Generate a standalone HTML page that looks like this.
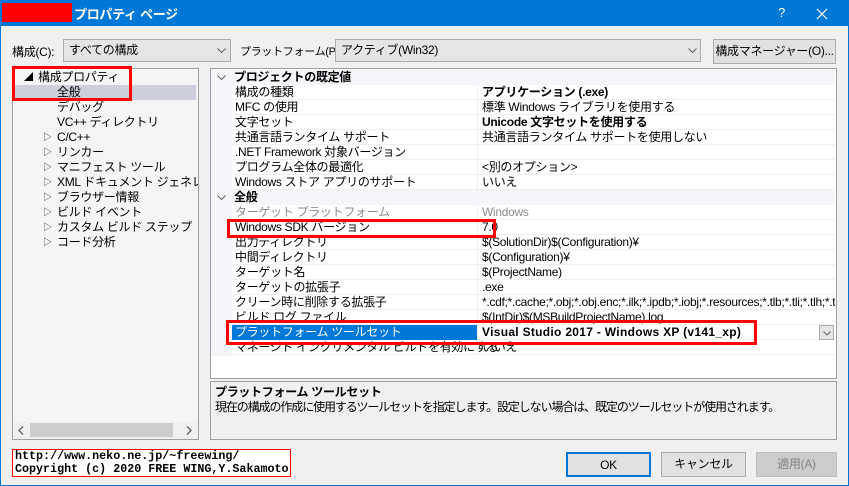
<!DOCTYPE html>
<html><head><meta charset="utf-8"><style>
*{margin:0;padding:0;box-sizing:border-box}
body{width:849px;height:486px;overflow:hidden;background:#f0f0f0;font-family:"Liberation Sans","Noto Sans CJK JP",sans-serif;font-size:12px;color:#000;position:relative;letter-spacing:-0.3px}
.a{position:absolute;white-space:nowrap}
.t{line-height:15px;height:15px}
.cb{background:#e5e5e5;border:1px solid #adadad;height:23px;line-height:21px;padding-left:5px}
.btn{background:#e1e1e1;border:1px solid #adadad;height:25px;line-height:23px;text-align:center}
.row{position:absolute;left:232px;width:603px;height:15px;border-bottom:1px solid #f0f0f0;background:#fff;line-height:14px}
.row .n{position:absolute;left:3px}
.row .v{position:absolute;left:245px;border-left:1px solid #f0f0f0;padding-left:4px;height:15px}
.hd{position:absolute;left:211px;width:624px;height:15px;background:#f4f6fa;font-weight:bold;line-height:15px}
.red{position:absolute;border:3px solid #f00}
</style></head><body>
<div class="a" style="left:0;top:0;width:849px;height:26px;background:#0078d7"></div>
<div class="a" style="left:2px;top:3px;width:70px;height:19px;background:#f00"></div>
<div class="a" style="left:74px;top:4px;color:#fff;font-size:13px;font-weight:bold">プロパティ ページ</div>
<div class="a" style="left:778px;top:5px;color:#fff;font-size:13px">?</div>
<svg class="a" style="left:816px;top:8px" width="12" height="12"><path d="M1 1L11 11M11 1L1 11" stroke="#fff" stroke-width="1.2"/></svg>
<div class="a" style="left:0;top:26px;width:1px;height:460px;background:#0078d7"></div>
<div class="a" style="left:848px;top:26px;width:1px;height:460px;background:#0078d7"></div>
<div class="a" style="left:0;top:485px;width:849px;height:1px;background:#0078d7"></div>

<div class="a" style="left:12px;top:43px">構成(C):</div>
<div class="a cb" style="left:63px;top:39px;width:168px">すべての構成</div>
<svg class="a" style="left:217px;top:48px" width="9" height="6"><path d="M0.5 0.5L4.5 4.5L8.5 0.5" stroke="#606060" fill="none"/></svg>
<div class="a" style="left:240px;top:43px;font-size:11px;letter-spacing:-0.3px">プラットフォーム(P):</div>
<div class="a cb" style="left:335px;top:39px;width:366px">アクティブ(Win32)</div>
<svg class="a" style="left:688px;top:48px" width="9" height="6"><path d="M0.5 0.5L4.5 4.5L8.5 0.5" stroke="#606060" fill="none"/></svg>
<div class="a btn" style="left:713px;top:39px;width:123px">構成マネージャー(O)...</div>

<div class="a" style="left:12px;top:68px;width:187px;height:372px;background:#f5f5f5;border:1px solid #a0a0a0;overflow:hidden">
<div class="a" style="left:0;top:16px;width:183px;height:15px;background:#cdd0dc"></div>
<div class="a t" style="left:11px;top:1px;font-size:9px">◢</div>
<div class="a t" style="left:25px;top:1px">構成プロパティ</div>
<div class="a t" style="left:44px;top:16px">全般</div>
<div class="a t" style="left:44px;top:31px">デバッグ</div>
<div class="a t" style="left:44px;top:46px">VC++ ディレクトリ</div>
<div class="a" style="left:30px;top:61px;font-size:9px;line-height:15px;color:#333">▷<br>▷<br>▷<br>▷<br>▷<br>▷<br>▷<br>▷</div>
<div class="a" style="left:44px;top:61px;line-height:15px">C/C++<br>リンカー<br>マニフェスト ツール<br>XML ドキュメント ジェネレーター<br>ブラウザー情報<br>ビルド イベント<br>カスタム ビルド ステップ<br>コード分析</div>
<div class="a" style="left:0;top:353px;width:185px;height:17px;background:#f0f0f0"></div>
<div class="a" style="left:17px;top:354px;width:143px;height:14px;background:#cdcdcd"></div>
<svg class="a" style="left:5px;top:357px" width="6" height="9"><path d="M5 0.5L1 4.5L5 8.5" stroke="#606060" fill="none" stroke-width="1.3"/></svg>
<svg class="a" style="left:173px;top:357px" width="6" height="9"><path d="M1 0.5L5 4.5L1 8.5" stroke="#606060" fill="none" stroke-width="1.3"/></svg>
</div>
<div class="red" style="left:12px;top:66px;width:120px;height:35px"></div>

<div class="a" style="left:210px;top:68px;width:627px;height:311px;background:#fff;border:1px solid #a0a0a0"></div>
<div class="a" style="left:211px;top:69px;width:21px;height:287px;background:#f4f6fa"></div>
<div class="hd" style="top:70px"><svg style="position:absolute;left:6px;top:5px" width="9" height="6"><path d="M0.5 0.5L4.5 4.5L8.5 0.5" stroke="#606060" fill="none"/></svg><span style="position:absolute;left:23px">プロジェクトの既定値</span></div>
<div class="row" style="top:85px"><span class="n">構成の種類</span><span class="v"><b>アプリケーション (.exe)</b></span></div>
<div class="row" style="top:100px"><span class="n">MFC の使用</span><span class="v">標準 Windows ライブラリを使用する</span></div>
<div class="row" style="top:115px"><span class="n">文字セット</span><span class="v"><b>Unicode 文字セットを使用する</b></span></div>
<div class="row" style="top:130px"><span class="n">共通言語ランタイム サポート</span><span class="v">共通言語ランタイム サポートを使用しない</span></div>
<div class="row" style="top:145px"><span class="n">.NET Framework 対象バージョン</span><span class="v"></span></div>
<div class="row" style="top:160px"><span class="n">プログラム全体の最適化</span><span class="v">&lt;別のオプション&gt;</span></div>
<div class="row" style="top:175px"><span class="n">Windows ストア アプリのサポート</span><span class="v">いいえ</span></div>
<div class="hd" style="top:190px"><svg style="position:absolute;left:6px;top:5px" width="9" height="6"><path d="M0.5 0.5L4.5 4.5L8.5 0.5" stroke="#606060" fill="none"/></svg><span style="position:absolute;left:23px">全般</span></div>
<div class="row" style="top:205px;color:#8d8d8d"><span class="n">ターゲット プラットフォーム</span><span class="v">Windows</span></div>
<div class="row" style="top:220px"><span class="n">Windows SDK バージョン</span><span class="v">7.0</span></div>
<div class="row" style="top:235px"><span class="n">出力ディレクトリ</span><span class="v">$(SolutionDir)$(Configuration)¥</span></div>
<div class="row" style="top:250px"><span class="n">中間ディレクトリ</span><span class="v">$(Configuration)¥</span></div>
<div class="row" style="top:265px"><span class="n">ターゲット名</span><span class="v">$(ProjectName)</span></div>
<div class="row" style="top:280px"><span class="n">ターゲットの拡張子</span><span class="v">.exe</span></div>
<div class="row" style="top:295px"><span class="n">クリーン時に削除する拡張子</span><span class="v" style="width:358px;overflow:hidden">*.cdf;*.cache;*.obj;*.obj.enc;*.ilk;*.ipdb;*.iobj;*.resources;*.tlb;*.tli;*.tlh;*.tmp</span></div>
<div class="row" style="top:310px"><span class="n">ビルド ログ ファイル</span><span class="v">$(IntDir)$(MSBuildProjectName).log</span></div>
<div class="row" style="top:325px"><span class="n" style="left:0;width:245px;height:15px;background:#0078d7;color:#fff;padding-left:3px">プラットフォーム ツールセット</span><span class="v" style="letter-spacing:0.3px"><b>Visual Studio 2017 - Windows XP (v141_xp)</b></span><span style="position:absolute;right:1px;top:0;width:15px;height:15px;background:#e5e5e5;border:1px solid #adadad"><svg style="position:absolute;left:3px;top:5px" width="8" height="5"><path d="M0.5 0.5L4 4L7.5 0.5" stroke="#606060" fill="none"/></svg></span></div>
<div class="row" style="top:340px"><span class="n">マネージド インクリメンタル ビルドを有効にする</span><span class="v">いいえ</span></div>
<div class="red" style="left:227px;top:219px;width:269px;height:19px"></div>
<div class="red" style="left:226px;top:320px;width:531px;height:25px"></div>

<div class="a" style="left:210px;top:381px;width:627px;height:59px;border:1px solid #a0a0a0;background:#f0f0f0"></div>
<div class="a" style="left:215px;top:383px;font-weight:bold">プラットフォーム ツールセット</div>
<div class="a" style="left:215px;top:398px;letter-spacing:-1.1px">現在の構成の作成に使用するツールセットを指定します。設定しない場合は、既定のツールセットが使用されます。</div>

<div class="a" style="left:12px;top:449px;width:279px;height:28px;background:#fff;border:1px solid #f00"></div>
<div class="a" style="left:15px;top:450px;font-family:'Liberation Mono',monospace;font-weight:bold;font-size:11.7px;line-height:13px;letter-spacing:0">http://www.neko.ne.jp/~freewing/<br>Copyright (c) 2020 FREE WING,Y.Sakamoto</div>
<div class="a btn" style="left:566px;top:452px;width:85px;border:2px solid #0078d7">OK</div>
<div class="a btn" style="left:661px;top:452px;width:85px">キャンセル</div>
<div class="a btn" style="left:756px;top:452px;width:81px;background:#cccccc;border-color:#bfbfbf;color:#838383">適用(A)</div>
</body></html>
